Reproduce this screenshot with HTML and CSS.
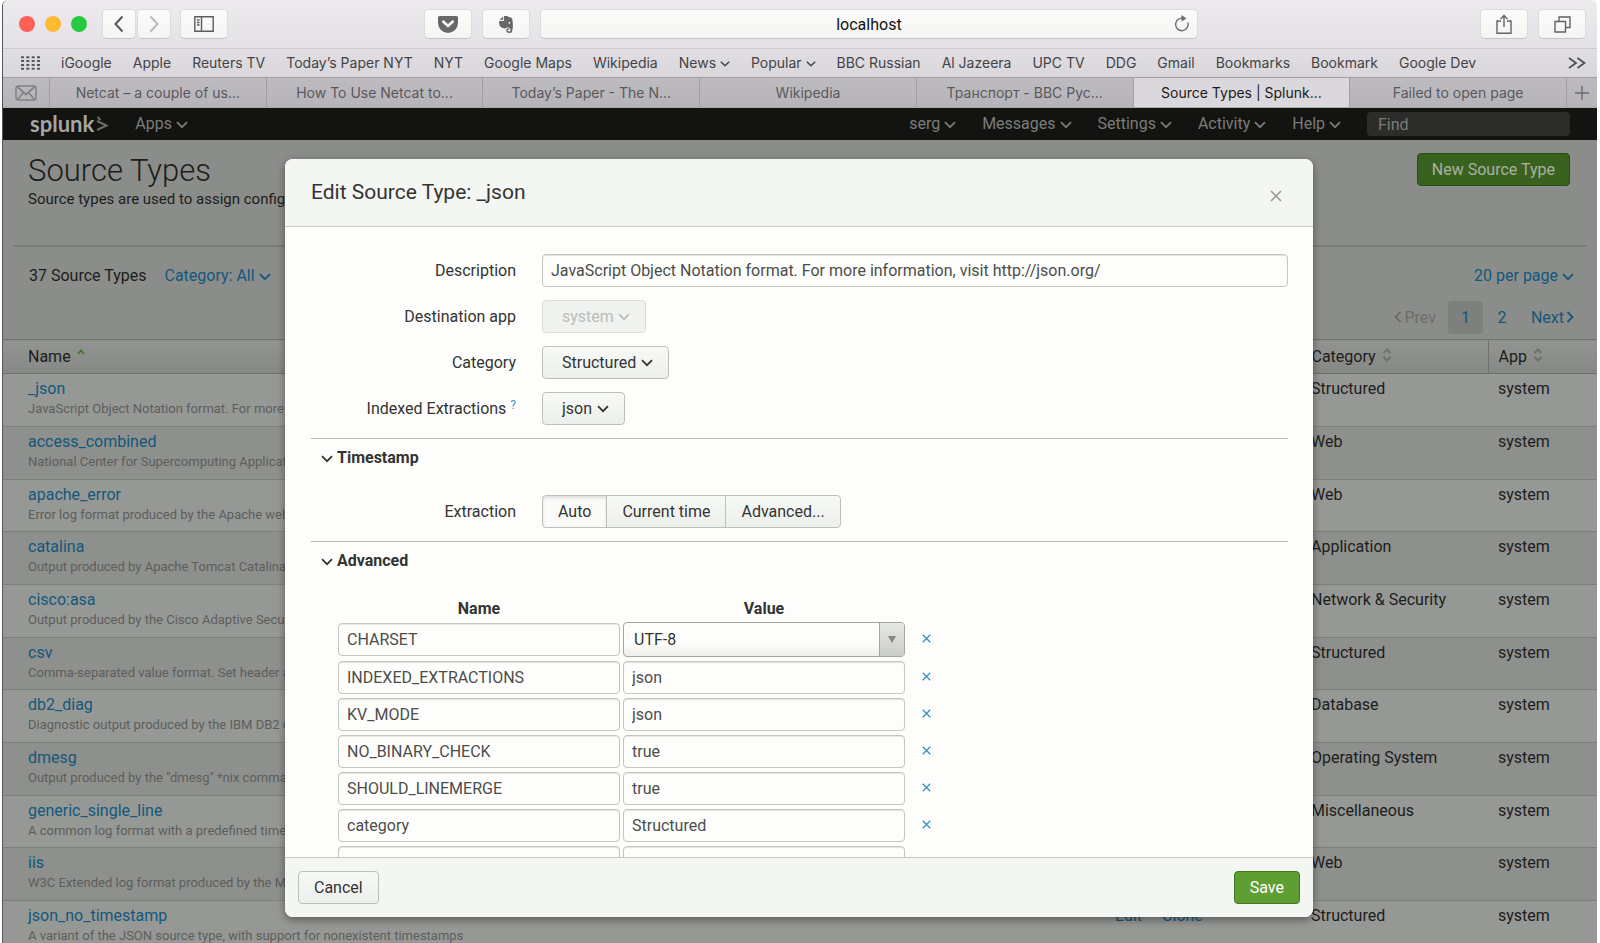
FILE: index.html
```html
<!DOCTYPE html>
<html lang="en">
<head>
    <meta charset="UTF-8">
    <meta name="viewport" content="width=device-width, initial-scale=1.0">
    <title>Source Types | Splunk</title>
    <link rel="stylesheet" href="styles.css">
</head>
<body>
    <svg class="symbols" aria-hidden="true">
        <symbol id="chevron" viewBox="0 0 12 8"><path d="M1 1.2l5 5 5-5" fill="none" stroke="currentColor" stroke-width="1.7"/></symbol>
        <symbol id="sort" viewBox="0 0 10 14"><path d="M1.5 5L5 1.5 8.500 5M1.500 9L5 12.500 8.500 9" fill="none" stroke="currentColor" stroke-width="2"/></symbol>
        <symbol id="cross" viewBox="0 0 12 12"><path d="M1 1l10 10M11 1L1 11" fill="none" stroke="currentColor" stroke-width="1.700"/></symbol>
    </svg>

    <div class="window">
        <!-- Browser toolbar -->
        <header class="toolbar">
            <div class="lights">
                <span class="light red"></span>
                <span class="light yellow"></span>
                <span class="light green"></span>
            </div>
            <div class="history">
                <button class="tool small" aria-label="Back"><svg width="10" height="18" viewBox="0 0 10 18"><path d="M8.500 1.500L1.500 9l7 7.500" fill="none" stroke="#58585a" stroke-width="2"/></svg></button>
                <button class="tool small" aria-label="Forward"><svg width="10" height="18" viewBox="0 0 10 18"><path d="M1.500 1.500L8.500 9l-7 7.500" fill="none" stroke="#b9b9bb" stroke-width="2"/></svg></button>
            </div>
            <button class="tool sidebar" aria-label="Sidebar"><svg width="20" height="16" viewBox="0 0 20 16"><path d="M.8.800h18.400v14.400H.800zM7.500.800v14.400M3 4h2.500M3 6.500h2.500M3 9h2.500" fill="none" stroke="#5c5c5e" stroke-width="1.400"/></svg></button>
            <button class="tool pocket" aria-label="Pocket"><svg width="20" height="17" viewBox="0 0 20 17"><path d="M1.500 0h17A1.500 1.500 0 0 1 20 1.500V7a10 10 0 0 1-20 0V1.500A1.500 1.500 0 0 1 1.500 0z" fill="#68686a"/><path d="M5.200 5.500L10 10l4.800-4.500" fill="none" stroke="#fff" stroke-width="2.400" stroke-linecap="round" stroke-linejoin="round"/></svg></button>
            <button class="tool" aria-label="Evernote"><svg width="14" height="17" viewBox="0 0 14 17"><path d="M4 .5v3.300H.500zM5 0h3c1 0 1.200 1.200 2.500 1.200 2 .2 2.700.800 2.900 2.300.5 3 .9 8.500-.4 12-.4 1-1.300 1.500-2.500 1.500-2.300 0-3.300-1-3.300-2.500 0-1.600 1.100-2.500 2.700-2.300v1.500c-.8 0-1.200.3-1.200.9 0 .6.500.9 1.300.9 1.200 0 1.500-.8 1.300-2.300-.200-1.200-1.300-1.400-3-1.700-.8-.200-1 1.100-2.700 1C3.500 11.900.500 11.600.2 7.500L0 5h4.700z" fill="#68686a"/><circle cx="10.400" cy="6.800" r=".9" fill="#fff"/></svg></button>
            <div class="address">
                <input type="text" value="localhost" aria-label="Address">
                <button class="reload" aria-label="Reload"><svg width="16" height="17" viewBox="0 0 16 17"><path d="M13.900 7.500A6.300 6.300 0 1 1 9 3.200" fill="none" stroke="#6b6b6d" stroke-width="1.400"/><path d="M7.500 0l5 3.400-5 3z" fill="#6b6b6d"/></svg></button>
            </div>
            <button class="tool share" aria-label="Share"><svg width="16" height="20" viewBox="0 0 16 20"><path d="M5 7H1v12.200h14V7h-4M8 13V1.500M4.500 5L8 1.500 11.500 5" fill="none" stroke="#626264" stroke-width="1.400"/></svg></button>
            <button class="tool" aria-label="Show tabs"><svg width="17" height="17" viewBox="0 0 17 17"><path d="M1 5.500h10.500V16H1zM5 5.500V1h11v10.500h-4.500" fill="none" stroke="#626264" stroke-width="1.400"/></svg></button>
        </header>

        <nav class="bookmarks">
            <svg class="grid-icon" width="19" height="14" viewBox="0 0 19 14"><path d="M0 1.200h19M0 5.100h19M0 9h19M0 12.800h19" stroke="#58585a" stroke-width="2" stroke-dasharray="3 2.330"/></svg>
            <a href="#">iGoogle</a>
            <a href="#">Apple</a>
            <a href="#">Reuters TV</a>
            <a href="#">Today’s Paper NYT</a>
            <a href="#">NYT</a>
            <a href="#">Google Maps</a>
            <a href="#">Wikipedia</a>
            <a href="#">News <svg class="chevron"><use href="#chevron"/></svg></a>
            <a href="#">Popular <svg class="chevron"><use href="#chevron"/></svg></a>
            <a href="#">BBC Russian</a>
            <a href="#">Al Jazeera</a>
            <a href="#">UPC TV</a>
            <a href="#">DDG</a>
            <a href="#">Gmail</a>
            <a href="#">Bookmarks</a>
            <a href="#">Bookmark</a>
            <a href="#">Google Dev</a>
            <button class="more" aria-label="More bookmarks"><svg width="18" height="12" viewBox="0 0 18 12"><path d="M1 1l7 5-7 5M9.500 1l7 5-7 5" fill="none" stroke="#505052" stroke-width="1.800"/></svg></button>
        </nav>

        <nav class="tabs">
            <a href="#" class="pinned" aria-label="Mail"><svg width="22" height="16" viewBox="0 0 22 16"><rect x="1" y="1" width="20" height="14" rx="2.500" fill="none" stroke="#818084" stroke-width="1.500"/><path d="M2.500 2L11 9.500 19.500 2M2.500 14.500L8.500 7.500M19.500 14.500L13.500 7.500" fill="none" stroke="#818084" stroke-width="1.700"/></svg></a>
            <a href="#" class="tab">Netcat – a couple of us...</a>
            <a href="#" class="tab">How To Use Netcat to...</a>
            <a href="#" class="tab">Today’s Paper - The N...</a>
            <a href="#" class="tab">Wikipedia</a>
            <a href="#" class="tab">Транспорт - BBC Рус...</a>
            <a href="#" class="tab active">Source Types | Splunk...</a>
            <a href="#" class="tab">Failed to open page</a>
            <button class="new-tab" aria-label="New tab"><svg width="14" height="14" viewBox="0 0 14 14"><path d="M7 0v14M0 7h14" stroke="#6a696d" stroke-width="1.400"/></svg></button>
        </nav>

        <div class="page">
            <nav class="splunk-bar">
                <a href="#" class="logo">splunk<svg width="12" height="16" viewBox="0 0 12 16"><path d="M1 5l9.500 4.500L1 14M1.500 1l3 3" fill="none" stroke="#6b6c69" stroke-width="2"/></svg></a>
                <a href="#">Apps <svg class="chevron"><use href="#chevron"/></svg></a>
                <div class="user-menu">
                    <a href="#">serg <svg class="chevron"><use href="#chevron"/></svg></a>
                    <a href="#">Messages <svg class="chevron"><use href="#chevron"/></svg></a>
                    <a href="#">Settings <svg class="chevron"><use href="#chevron"/></svg></a>
                    <a href="#">Activity <svg class="chevron"><use href="#chevron"/></svg></a>
                    <a href="#">Help <svg class="chevron"><use href="#chevron"/></svg></a>
                    <input type="text" class="find" placeholder="Find" aria-label="Find">
                </div>
            </nav>

            <div class="page-header">
                <div>
                    <h1>Source Types</h1>
                    <p>Source types are used to assign configurations.</p>
                </div>
                <button class="new-btn">New Source Type</button>
            </div>

            <div class="filters">
                <div class="filter-left">
                    <span>37 Source Types</span>
                    <button class="link-btn">Category: All <svg class="chevron"><use href="#chevron"/></svg></button>
                </div>
                <div class="filter-right">
                    <button class="link-btn">20 per page <svg class="chevron"><use href="#chevron"/></svg></button>
                    <div class="pagination">
                        <span class="prev"><svg width="8" height="12" viewBox="0 0 8 12"><path d="M6.500 1L1.500 6l5 5" fill="none" stroke="currentColor" stroke-width="1.800"/></svg>Prev</span>
                        <a href="#" class="current">1</a>
                        <a href="#" class="number">2</a>
                        <a href="#" class="next">Next<svg width="8" height="12" viewBox="0 0 8 12"><path d="M1.500 1l5 5-5 5" fill="none" stroke="currentColor" stroke-width="1.800"/></svg></a>
                    </div>
                </div>
            </div>

            <table class="types">
                <colgroup>
                    <col>
                    <col class="col-actions">
                    <col class="col-category">
                    <col class="col-app">
                </colgroup>
                <thead>
                    <tr>
                        <th>Name <svg class="sorted" viewBox="0 0 8 6"><path d="M1 5l3-3.500L7 5" fill="none" stroke="currentColor" stroke-width="1.800"/></svg></th>
                        <th>Actions</th>
                        <th>Category <svg class="sort"><use href="#sort"/></svg></th>
                        <th>App <svg class="sort"><use href="#sort"/></svg></th>
                    </tr>
                </thead>
                <tbody>
                    <tr><td><a href="#">_json</a><p>JavaScript Object Notation format. For more</p></td><td><a href="#">Edit</a></td><td>Structured</td><td>system</td></tr>
                    <tr><td><a href="#">access_combined</a><p>National Center for Supercomputing Applications</p></td><td><a href="#">Edit</a></td><td>Web</td><td>system</td></tr>
                    <tr><td><a href="#">apache_error</a><p>Error log format produced by the Apache web</p></td><td><a href="#">Edit</a></td><td>Web</td><td>system</td></tr>
                    <tr><td><a href="#">catalina</a><p>Output produced by Apache Tomcat Catalina</p></td><td><a href="#">Edit</a></td><td>Application</td><td>system</td></tr>
                    <tr><td><a href="#">cisco:asa</a><p>Output produced by the Cisco Adaptive Security</p></td><td><a href="#">Edit</a></td><td>Network &amp; Security</td><td>system</td></tr>
                    <tr><td><a href="#">csv</a><p>Comma-separated value format. Set header and</p></td><td><a href="#">Edit</a></td><td>Structured</td><td>system</td></tr>
                    <tr><td><a href="#">db2_diag</a><p>Diagnostic output produced by the IBM DB2 db</p></td><td><a href="#">Edit</a></td><td>Database</td><td>system</td></tr>
                    <tr><td><a href="#">dmesg</a><p>Output produced by the "dmesg" *nix command</p></td><td><a href="#">Edit</a></td><td>Operating System</td><td>system</td></tr>
                    <tr><td><a href="#">generic_single_line</a><p>A common log format with a predefined timestamp</p></td><td><a href="#">Edit</a></td><td>Miscellaneous</td><td>system</td></tr>
                    <tr><td><a href="#">iis</a><p>W3C Extended log format produced by the MS</p></td><td><a href="#">Edit</a></td><td>Web</td><td>system</td></tr>
                    <tr><td><a href="#">json_no_timestamp</a><p>A variant of the JSON source type, with support for nonexistent timestamps</p></td><td><a href="#">Edit</a><a href="#">Clone</a></td><td>Structured</td><td>system</td></tr>
                </tbody>
            </table>

            <!-- Edit dialog -->
            <div class="modal" role="dialog" aria-labelledby="modalTitle">
                <div class="modal-header">
                    <h2 id="modalTitle">Edit Source Type: _json</h2>
                    <button class="close" aria-label="Close"><svg width="12" height="12"><use href="#cross"/></svg></button>
                </div>
                <form class="modal-body">
                    <div class="form-group">
                        <label for="description">Description</label>
                        <input type="text" id="description" value="JavaScript Object Notation format. For more information, visit http://json.org/">
                    </div>
                    <div class="form-group">
                        <label for="app">Destination app</label>
                        <span class="dropdown disabled"><select id="app" disabled><option>system</option></select><svg class="chevron"><use href="#chevron"/></svg></span>
                    </div>
                    <div class="form-group">
                        <label for="category">Category</label>
                        <span class="dropdown"><select id="category"><option>Structured</option></select><svg class="chevron"><use href="#chevron"/></svg></span>
                    </div>
                    <div class="form-group">
                        <label for="extractions">Indexed Extractions <a href="#" class="help">?</a></label>
                        <span class="dropdown"><select id="extractions"><option>json</option></select><svg class="chevron"><use href="#chevron"/></svg></span>
                    </div>

                    <section>
                        <h3><svg class="chevron"><use href="#chevron"/></svg>Timestamp</h3>
                        <div class="form-group">
                            <span class="label">Extraction</span>
                            <div class="btn-group">
                                <button type="button" class="selected">Auto</button>
                                <button type="button">Current time</button>
                                <button type="button">Advanced...</button>
                            </div>
                        </div>
                    </section>

                    <section>
                        <h3><svg class="chevron"><use href="#chevron"/></svg>Advanced</h3>
                        <div class="settings">
                            <span class="heading">Name</span>
                            <span class="heading">Value</span>
                            <span></span>
                            <input type="text" value="CHARSET" aria-label="Name">
                            <span class="charset"><select aria-label="Value"><option>UTF-8</option></select><span class="arrow"></span></span>
                            <button type="button" class="remove" aria-label="Remove"><svg width="9" height="9"><use href="#cross"/></svg></button>
                            <input type="text" value="INDEXED_EXTRACTIONS" aria-label="Name">
                            <input type="text" value="json" aria-label="Value">
                            <button type="button" class="remove" aria-label="Remove"><svg width="9" height="9"><use href="#cross"/></svg></button>
                            <input type="text" value="KV_MODE" aria-label="Name">
                            <input type="text" value="json" aria-label="Value">
                            <button type="button" class="remove" aria-label="Remove"><svg width="9" height="9"><use href="#cross"/></svg></button>
                            <input type="text" value="NO_BINARY_CHECK" aria-label="Name">
                            <input type="text" value="true" aria-label="Value">
                            <button type="button" class="remove" aria-label="Remove"><svg width="9" height="9"><use href="#cross"/></svg></button>
                            <input type="text" value="SHOULD_LINEMERGE" aria-label="Name">
                            <input type="text" value="true" aria-label="Value">
                            <button type="button" class="remove" aria-label="Remove"><svg width="9" height="9"><use href="#cross"/></svg></button>
                            <input type="text" value="category" aria-label="Name">
                            <input type="text" value="Structured" aria-label="Value">
                            <button type="button" class="remove" aria-label="Remove"><svg width="9" height="9"><use href="#cross"/></svg></button>
                            <input type="text" aria-label="Name">
                            <input type="text" aria-label="Value">
                        </div>
                    </section>
                </form>
                <div class="modal-footer">
                    <button class="btn">Cancel</button>
                    <button class="btn save">Save</button>
                </div>
            </div>
        </div>
    </div>
</body>
</html>
```
FILE: styles.css
```css
* {
    box-sizing: border-box;
}

body {
    margin: 0;
    background-color: #fff;
    font-family: Roboto, "Liberation Sans", sans-serif;
    font-size: 16px;
    line-height: 20px;
    color: #1c1d1b;
}

a {
    color: inherit;
    text-decoration: none;
}

button,
input,
select {
    font: inherit;
    color: inherit;
    margin: 0;
}

button {
    cursor: pointer;
}

.symbols {
    position: absolute;
    width: 0;
    height: 0;
}

.chevron {
    width: 12px;
    height: 8px;
    flex: none;
}

.window {
    display: flex;
    flex-direction: column;
    height: 100vh;
    margin: 0 3px 0 2px;
    border-left: 1px solid #55565a;
    border-radius: 6px 6px 0 0;
    overflow: hidden;
}

/* Toolbar */
.toolbar {
    display: flex;
    align-items: center;
    height: 49px;
    flex: none;
    padding: 0 11px 0 16px;
    background: linear-gradient(#eeebef, #e4e1e6);
    border-bottom: 1px solid #cac7cc;
}

.lights {
    display: flex;
    gap: 10px;
}

.light {
    width: 16px;
    height: 16px;
    border-radius: 50%;
}

.red {
    background-color: #fe5f57;
}

.yellow {
    background-color: #fdbc2f;
}

.green {
    background-color: #27c93f;
}

.history {
    display: flex;
    gap: 1px;
    margin: 0 9px 0 15px;
}

.tool {
    display: flex;
    align-items: center;
    justify-content: center;
    width: 48px;
    height: 30px;
    padding: 0;
    flex: none;
    border: 1px solid #dcdadd;
    border-bottom-color: #c5c3c7;
    border-radius: 5px;
    background: linear-gradient(#fcfdfb, #f3f5f2);
}

.tool.small {
    width: 34px;
}

.tool.pocket {
    margin: 0 10px 0 12%;
    margin-left: 12.5%;
}

.tool.share {
    margin: 0 10px 0 18%;
}

.address {
    position: relative;
    flex: 1;
    margin-left: 10px;
}

.address input {
    display: block;
    width: 100%;
    height: 30px;
    border: 1px solid #dcdadd;
    border-bottom-color: #c5c3c7;
    border-radius: 5px;
    background: linear-gradient(#fcfdfb, #f3f5f2);
    text-align: center;
    color: #111;
}

.reload {
    position: absolute;
    top: 6px;
    right: 8px;
    display: flex;
    padding: 0;
    border: none;
    background: none;
}

/* Bookmarks */
.bookmarks {
    display: flex;
    align-items: center;
    gap: 21px;
    height: 29px;
    flex: none;
    padding: 0 11px 0 18px;
    background: linear-gradient(#e1dee3, #dad7dc);
    border-bottom: 1px solid #a09ea3;
    font-family: Inter, sans-serif;
    font-size: 14px;
    color: #444346;
    white-space: nowrap;
}

.bookmarks .chevron {
    width: 10px;
}

.more {
    display: flex;
    margin-left: auto;
    padding: 0;
    border: none;
    background: none;
}

/* Tabs */
.tabs {
    display: flex;
    height: 30px;
    flex: none;
    background: linear-gradient(#bebbc0, #b7b4b9);
    border-bottom: 1px solid #aaa;
    font-family: Inter, sans-serif;
    font-size: 14px;
    line-height: 29px;
    text-align: center;
    color: #59585b;
    white-space: nowrap;
}

.pinned,
.new-tab {
    display: flex;
    align-items: center;
    justify-content: center;
    width: 46px;
    flex: none;
}

.new-tab {
    width: 31px;
    padding: 0;
    border: none;
    border-left: 1px solid #a09ea3;
    background: none;
}

.tab {
    flex: 1;
    border-left: 1px solid #a09ea3;
}

.tab.active {
    background-color: #dbd8dd;
    color: #1a1a1b;
}

/* Splunk page, dimmed behind the dialog */
.page {
    position: relative;
    flex: 1;
    min-height: 0;
    overflow: hidden;
    background-color: #8b8d8a;
}

.splunk-bar {
    display: flex;
    align-items: center;
    height: 32px;
    padding: 0 27px;
    background-color: #131411;
    color: #7b7c79;
}

.logo {
    display: flex;
    align-items: center;
    gap: 2px;
    margin-right: 27px;
    font-family: Lato, sans-serif;
    font-size: 22px;
    font-weight: bold;
    color: #a5a6a3;
}

.user-menu {
    display: flex;
    align-items: center;
    gap: 26px;
    margin-left: auto;
}

.find {
    width: 203px;
    height: 24px;
    padding: 0 11px;
    border: none;
    border-radius: 4px;
    background-color: #2c2d2a;
}

.find::placeholder {
    color: #7b7c79;
}

.page-header {
    display: flex;
    justify-content: space-between;
    align-items: flex-start;
    height: 107px;
    margin: 0 10px;
    padding: 13px 17px 0 15px;
    border-bottom: 2px solid #7a7c79;
}

h1 {
    margin: 0;
    font-size: 31px;
    line-height: 36px;
    font-weight: 300;
}

.page-header p {
    margin: 0;
    font-size: 15px;
}

.new-btn {
    height: 33px;
    padding: 0 14px;
    border: 1px solid #294d12;
    border-radius: 4px;
    background-color: #3a621f;
    color: #a9b0a4;
}

.filters {
    display: flex;
    justify-content: space-between;
    height: 92px;
    padding: 19px 23px 0 26px;
}

.filter-left {
    display: flex;
    align-items: flex-start;
    gap: 18px;
}

.filter-right {
    display: flex;
    flex-direction: column;
    align-items: flex-end;
    gap: 15px;
}

.link-btn {
    padding: 0;
    border: none;
    background: none;
    color: #13587c;
}

.pagination {
    display: flex;
    align-items: center;
    line-height: 33px;
    color: #13587c;
}

.prev {
    margin-right: 12px;
    color: #6b6d6a;
}

.prev svg {
    margin-right: 2px;
}

.current {
    width: 35px;
    border-radius: 4px;
    background-color: #7e807d;
    text-align: center;
}

.number {
    width: 38px;
    text-align: center;
}

.next {
    margin-left: 10px;
}

.next svg {
    margin-left: 2px;
}

.types {
    width: 100%;
    table-layout: fixed;
    border-collapse: collapse;
    white-space: nowrap;
}

.col-actions {
    width: 196px;
}

.col-category {
    width: 187px;
}

.col-app {
    width: 109px;
}

.types th {
    height: 34px;
    padding: 0 10px;
    border: 1px solid #6e706d;
    border-width: 1px 0 1px 1px;
    background: linear-gradient(#929491, #868885);
    font-weight: normal;
    text-align: left;
}

.types th:first-child,
.types td:first-child {
    padding-left: 25px;
    border-left: none;
}

.types td {
    height: 53px;
    padding: 5px 10px 0;
    border-bottom: 1px solid #7d7f7c;
    background-color: #969895;
    vertical-align: top;
}

.types tr:nth-child(even) td {
    background-color: #8e908d;
}

.types tr:nth-child(3n) td {
    height: 52px;
}

.types td p {
    margin: 0;
    font-size: 13px;
    color: #5c5e5b;
}

.types td a {
    margin-right: 20px;
    color: #13587c;
}

.sorted {
    width: 8px;
    height: 6px;
    margin: 0 0 7px 2px;
    color: #43761f;
}

.sort {
    width: 10px;
    height: 14px;
    margin-left: 2px;
    color: #6e706d;
}

/* Dialog */
.modal {
    position: absolute;
    top: 51px;
    right: 284px;
    bottom: 26px;
    left: 282px;
    display: flex;
    flex-direction: column;
    border-radius: 8px;
    background-color: #fdfefc;
    box-shadow: 0 3px 9px rgba(0, 0, 0, 0.4);
    overflow: hidden;
    color: #333432;
}

.modal-header {
    display: flex;
    align-items: center;
    justify-content: space-between;
    height: 68px;
    flex: none;
    padding: 0 31px 2px 26px;
    border-bottom: 1px solid #c6c8c5;
    background-color: #f4f6f3;
}

h2 {
    margin: 0;
    font-size: 21px;
    line-height: 24px;
    font-weight: normal;
}

.close {
    display: flex;
    padding: 8px 0 0;
    border: none;
    background: none;
    color: #999b98;
}

.modal-body {
    flex: 1;
    min-height: 0;
    padding: 27px 25px 0 26px;
    overflow: hidden;
}

.form-group {
    display: grid;
    grid-template-columns: 205px 1fr;
    column-gap: 26px;
    align-items: center;
    justify-items: start;
    margin-bottom: 13px;
}

.form-group label,
.form-group .label {
    justify-self: end;
}

.modal input {
    width: 100%;
    height: 33px;
    padding: 0 8px;
    border: 1px solid #c3c5c2;
    border-radius: 4px;
    background-color: #fdfefc;
    box-shadow: inset 0 1px 1px #e3e5e2;
    color: #4c4d4b;
}

.help {
    color: #3a9bd0;
    font-size: 12px;
    vertical-align: 5px;
    line-height: 1;
}

.dropdown {
    position: relative;
    display: inline-flex;
}

.dropdown .chevron {
    position: absolute;
    top: 13px;
    right: 16px;
    pointer-events: none;
}

.dropdown select,
.btn,
.btn-group button {
    height: 33px;
    border: 1px solid #bdbfbc;
    border-radius: 4px;
    background: linear-gradient(#f7f9f6, #edefec);
}

.dropdown select {
    appearance: none;
    padding: 0 31px 0 19px;
}

.dropdown.disabled,
.dropdown.disabled select {
    color: #bbbdba;
    opacity: 1;
}

.dropdown.disabled select {
    border-color: #dbddda;
    background: #f0f2ef;
}

section {
    border-top: 1px solid #b7b9b6;
}

section .form-group {
    margin-top: 27px;
}

h3 {
    margin: 0;
    padding: 9px 10px 0;
    font-size: 16px;
    line-height: 20px;
    font-weight: bold;
}

h3 .chevron {
    margin-right: 4px;
}

.btn-group {
    display: flex;
}

.btn-group button {
    padding: 0 15px;
    border-radius: 0;
    margin-left: -1px;
}

.btn-group button:first-child {
    margin-left: 0;
    border-radius: 4px 0 0 4px;
}

.btn-group button:last-child {
    border-radius: 0 4px 4px 0;
}

.btn-group .selected {
    background: #fafbf9;
    box-shadow: inset 0 2px 3px #dddfdc;
}

.settings {
    display: grid;
    grid-template-columns: 282px 282px 36px;
    gap: 4px 3px;
    align-items: center;
    padding: 28px 27px 0;
}

.settings .heading {
    height: 19px;
    font-weight: bold;
    text-align: center;
}

.charset {
    position: relative;
    display: flex;
}

.charset select {
    appearance: none;
    width: 100%;
    height: 35px;
    padding: 0 10px;
    border: 1px solid #a3a5a2;
    border-radius: 4px;
    background: linear-gradient(#fdfefc 60%, #eceeeb);
}

.charset .arrow {
    position: absolute;
    top: 1px;
    right: 1px;
    width: 25px;
    height: 33px;
    border-left: 1px solid #a3a5a2;
    border-radius: 0 3px 3px 0;
    background: linear-gradient(#e6e8e5, #cbcdca);
    pointer-events: none;
}

.charset .arrow::after {
    content: "";
    position: absolute;
    top: 13px;
    left: 8px;
    border: 4px solid transparent;
    border-top: 7px solid #858784;
    border-bottom: none;
}

.remove {
    display: flex;
    align-items: center;
    justify-content: center;
    height: 33px;
    padding: 0 0 2px;
    border: none;
    background: none;
    color: #2f8fcb;
}

.modal-footer {
    display: flex;
    align-items: center;
    justify-content: space-between;
    height: 60px;
    flex: none;
    padding: 0 13px;
    border-top: 1px solid #c6c8c5;
    background-color: #f4f6f3;
}

.btn {
    padding: 0 15px;
}

.save {
    border-color: #47761f;
    background: #5f9e33;
    color: #fff;
}
```
